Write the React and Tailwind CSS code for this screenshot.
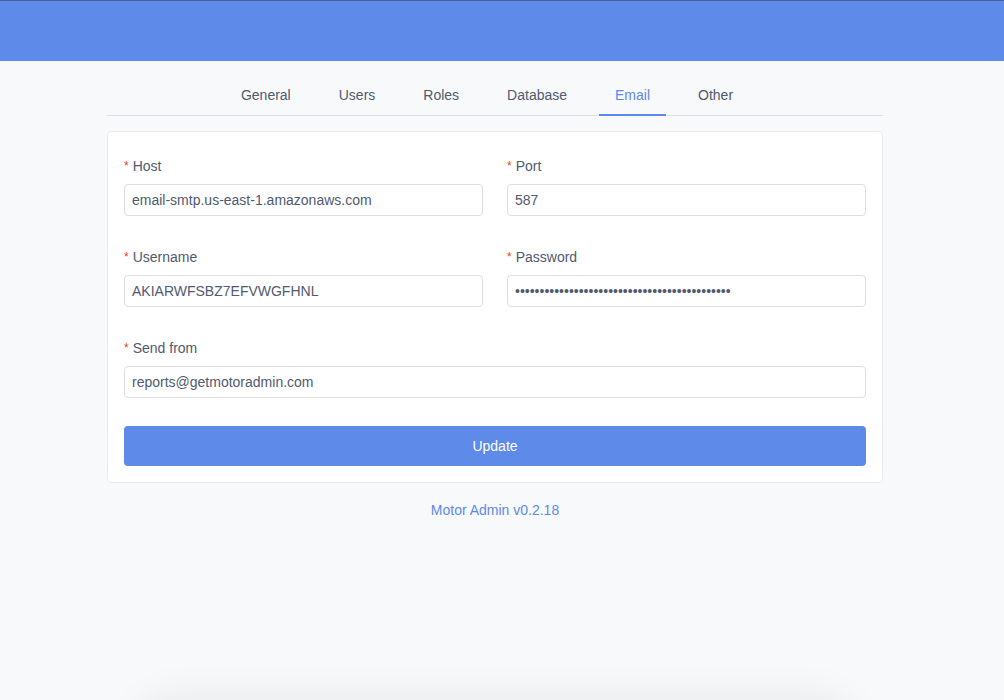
import { useState } from "react";

const tabs = ["General", "Users", "Roles", "Database", "Email", "Other"];

function Field({ label, value, type = "text" }) {
  return (
    <div className="flex flex-col">
      <label className="h-5 leading-5 text-[14px] text-[#515a6e] mb-2">
        <span className="text-[#ed4014] mr-1 text-[12px] align-[1px]">*</span>
        {label}
      </label>
      <input
        type={type}
        defaultValue={value}
        className="h-8 w-full rounded-[4px] border border-[#dcdee2] bg-white px-[7px] text-[14px] text-[#515a6e] outline-none"
      />
    </div>
  );
}

export default function App() {
  const [active, setActive] = useState("Email");

  return (
    <div
      className="h-[700px] bg-[#f8f9fb] overflow-hidden"
      style={{ fontFamily: '"Liberation Sans", Arial, sans-serif' }}
    >
      <div className="h-[61px] bg-[#5e8ae9] border-t border-[#44619f]" />

      <div className="w-[776px] ml-[107px] pt-4">
        <div className="flex justify-center border-b border-[#dcdee2]">
          {tabs.map((t) => (
            <button
              key={t}
              onClick={() => setActive(t)}
              className={
                "mr-4 px-4 pt-[8px] pb-[9px] leading-[20px] text-[14px] border-b-2 -mb-px " +
                (active === t ? "text-[#5e8ae9] border-[#5e8ae9]" : "text-[#515a6e] border-transparent")
              }
            >
              {t}
            </button>
          ))}
        </div>

        <div className="mt-[15px] bg-white border border-[#e8eaec] rounded-[4px] px-4 pt-6 pb-4">
          <div className="grid grid-cols-2 gap-x-6 gap-y-[31px]">
            <Field label="Host" value="email-smtp.us-east-1.amazonaws.com" />
            <Field label="Port" value="587" />
            <Field label="Username" value="AKIARWFSBZ7EFVWGFHNL" />
            <Field label="Password" value="AKIARWFSBZ7EFVWGFHNLsecretkeyvalue1234567890" type="password" />
            <div className="col-span-2">
              <Field label="Send from" value="reports@getmotoradmin.com" />
            </div>
          </div>
          <button className="mt-[28px] w-full h-10 rounded-[4px] bg-[#5e8ae9] text-white text-[14px]">
            Update
          </button>
        </div>

        <div className="mt-[18px] text-center text-[14px] leading-[18px] text-[#5e8ae9]">Motor Admin v0.2.18</div>

        <div className="mt-[184px] mx-auto w-[720px] h-40 bg-[#f8f9fb] rounded-[40px] shadow-[0_-6px_40px_rgba(0,0,0,0.07)]" />
      </div>
    </div>
  );
}
